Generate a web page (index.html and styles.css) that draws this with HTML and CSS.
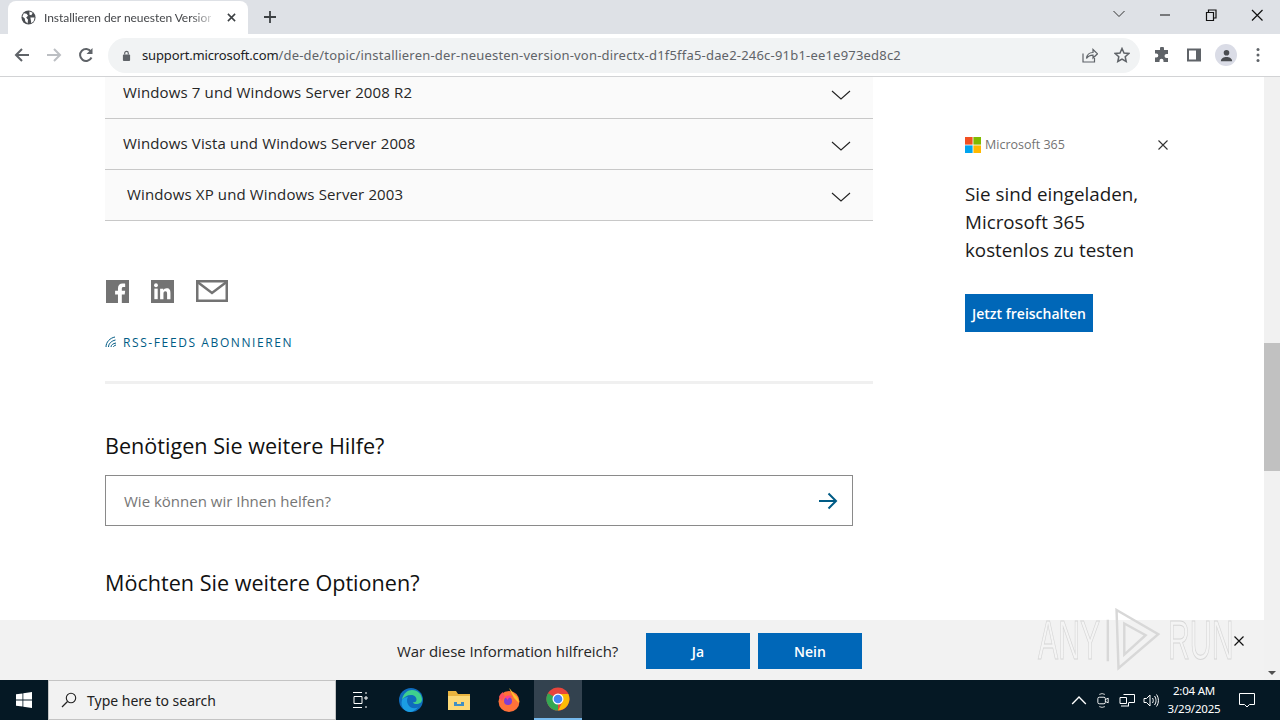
FILE: index.html
```html
<!DOCTYPE html>
<html lang="de">
<head>
  <meta charset="UTF-8" />
  <title>Installieren der neuesten Version von DirectX</title>
  <link rel="stylesheet" href="styles.css">
</head>
<body>
  <div class="tabstrip">
    <div class="tab">
      <svg class="favicon" viewBox="0 0 16 16"><circle cx="8" cy="8" r="7.5" fill="#4a4d51"/><path d="M3 3.5l3 .5 1.5 2-2 2 2 2.500-.5 4-2.500-2.500-.5-3-2.500-2zM9 1.500l3.500 1.500-1.500 2.500-2-.5zM10 8h4.500l-1 4-2.500 2-.5-3z" fill="#fff"/></svg>
      <span class="tab-title">Installieren der neuesten Version</span>
      <svg class="tab-close" viewBox="0 0 10 10"><path d="M1 1l8 8M9 1l-8 8" stroke="#3c4043" stroke-width="1.700"/></svg>
    </div>
    <svg class="new-tab" viewBox="0 0 12 12"><path d="M6 0v12M0 6h12" stroke="#3c4043" stroke-width="1.800"/></svg>
    <div class="window-controls">
      <svg class="win-btn" viewBox="0 0 46 20"><path d="M17.500 6l5.500 5.500L28.500 6" fill="none" stroke="#333" stroke-width="1"/></svg>
      <svg class="win-btn" viewBox="0 0 46 20"><path d="M18 10h10" stroke="#111" stroke-width="1"/></svg>
      <svg class="win-btn" viewBox="0 0 46 20"><path d="M18.500 7.500h7v8h-7zM20.500 7.500v-2.500h7.500v8h-2.500" fill="none" stroke="#111" stroke-width="1.200"/></svg>
      <svg class="win-btn" viewBox="0 0 46 20"><path d="M18 5l10.500 10.500M28.500 5L18 15.500" stroke="#111" stroke-width="1.200"/></svg>
    </div>
  </div>

  <div class="toolbar">
    <svg class="nav-icon" viewBox="0 0 16 16"><path d="M15 8H2M8 2L2 8l6 6" fill="none" stroke="#5f6368" stroke-width="2"/></svg>
    <svg class="nav-icon" viewBox="0 0 16 16"><path d="M1 8h13M8 2l6 6-6 6" fill="none" stroke="#bcbfc3" stroke-width="2"/></svg>
    <svg class="nav-icon" viewBox="0 0 16 16"><path d="M13.500 10.500A6 6 0 1 1 13 4.500" fill="none" stroke="#5f6368" stroke-width="2"/><path d="M14.500 1v6h-6z" fill="#5f6368"/></svg>
    <div class="omnibox">
      <svg class="lock" viewBox="0 0 10 12"><rect x="1" y="5" width="8" height="7" rx="1" fill="#5f6368"/><path d="M3 5V3.500a2 2 0 0 1 4 0V5" fill="none" stroke="#5f6368" stroke-width="1.300"/></svg>
      <span class="url"><span class="url-host">support.microsoft.com</span>/de-de/topic/installieren-der-neuesten-version-von-directx-d1f5ffa5-dae2-246c-91b1-ee1e973ed8c2</span>
      <svg class="omni-icon share-icon" viewBox="0 0 16 16"><path d="M1 6.500V15h11.500V11" fill="none" stroke="#5f6368" stroke-width="1.200"/><path d="M4.500 11.500c.5-4 3-6 6.500-6V2.500l4.500 4.300-4.500 4.200V8.200c-3 0-5 1-6.500 3.300z" fill="none" stroke="#5f6368" stroke-width="1.200"/></svg>
      <svg class="omni-icon" viewBox="0 0 16 16"><path d="M8 1.500l2 4.500 4.800.5-3.600 3.200 1 4.800L8 12l-4.200 2.500 1-4.800L1.200 6.500 6 6z" fill="none" stroke="#5f6368" stroke-width="1.500"/></svg>
    </div>
    <svg class="tool-icon puzzle" viewBox="0 0 16 16"><path d="M6 1.500a2 2 0 0 1 4 0V3h4v4h-1.500a2 2 0 0 0 0 4H14v4H9.500v-1.300a2 2 0 0 0-4 0V15H1v-4.500h1.300a2 2 0 0 0 0-4H1V3h5z" fill="#5f6368"/></svg>
    <svg class="tool-icon" viewBox="0 0 16 16"><path d="M1 1.500h14v13H1z" fill="#5f6368"/><path d="M3 3.500h7v9H3z" fill="#fff"/></svg>
    <div class="avatar">
      <svg viewBox="0 0 16 16"><circle cx="8" cy="5" r="3" fill="#4a4d51"/><path d="M2 14c0-3 3-4.500 6-4.500s6 1.500 6 4.500z" fill="#4a4d51"/></svg>
    </div>
    <svg class="menu-dots" viewBox="0 0 4 16"><circle cx="2" cy="2.500" r="1.500" fill="#5f6368"/><circle cx="2" cy="8" r="1.500" fill="#5f6368"/><circle cx="2" cy="13.500" r="1.500" fill="#5f6368"/></svg>
  </div>

  <div class="viewport">
    <div class="page">
      <main class="main">
        <div class="accordion">
          <div class="acc-row acc-first">
            <span>Windows 7 und Windows Server 2008 R2</span>
            <svg class="chevron" viewBox="0 0 20 10"><path d="M1 1l9 8 9-8" fill="none" stroke="#222" stroke-width="1.100"/></svg>
          </div>
          <div class="acc-row">
            <span>Windows Vista und Windows Server 2008</span>
            <svg class="chevron" viewBox="0 0 20 10"><path d="M1 1l9 8 9-8" fill="none" stroke="#222" stroke-width="1.100"/></svg>
          </div>
          <div class="acc-row acc-indent">
            <span>Windows XP und Windows Server 2003</span>
            <svg class="chevron" viewBox="0 0 20 10"><path d="M1 1l9 8 9-8" fill="none" stroke="#222" stroke-width="1.100"/></svg>
          </div>
        </div>

        <div class="share">
          <svg class="share-fb" viewBox="0 0 24 24"><rect width="24" height="24" fill="#737373"/><path d="M16.500 24v-9h3l.5-3.800h-3.500V9c0-1.100.4-1.800 1.900-1.800H20V3.800c-.4 0-1.500-.1-2.800-.1-2.800 0-4.700 1.700-4.700 4.800v2.700H9.500V15h3v9z" fill="#fff"/></svg>
          <svg class="share-in" viewBox="0 0 24 24"><rect width="24" height="24" fill="#737373"/><rect x="3.500" y="9" width="3.500" height="11" fill="#fff"/><circle cx="5.200" cy="5.500" r="2" fill="#fff"/><path d="M9.500 9h3.300v1.600c.6-1 1.800-1.900 3.500-1.900 3.300 0 4 2.200 4 5V20h-3.500v-5.500c0-1.400-.2-2.800-1.800-2.800s-2 1.300-2 2.700V20H9.500z" fill="#fff"/></svg>
          <svg class="share-mail" viewBox="0 0 32 22"><rect x="1.250" y="1.250" width="29.500" height="19.500" fill="none" stroke="#737373" stroke-width="2.500"/><path d="M1.500 2L16 13 30.500 2" fill="none" stroke="#737373" stroke-width="2.500"/></svg>
        </div>

        <a class="rss">
          <svg class="rss-icon" viewBox="0 0 12 12"><path d="M1 11C1 6 5 2 10 1M3.500 11c0-3 2.500-6 7-7M6 11c0-2 2-3.500 5-4M8.500 11c0-1 1-1.500 2.500-2" fill="none" stroke="#005b85" stroke-width="1"/></svg>
          <span>RSS-Feeds abonnieren</span>
        </a>

        <hr class="divider">

        <h2 class="help-title">Benötigen Sie weitere Hilfe?</h2>
        <div class="searchbox">
          <span class="placeholder">Wie können wir Ihnen helfen?</span>
          <svg class="search-arrow" viewBox="0 0 20 18"><path d="M1 9h17M10.500 1.500L18 9l-7.500 7.500" fill="none" stroke="#005b85" stroke-width="2"/></svg>
        </div>
        <h2 class="options-title">Möchten Sie weitere Optionen?</h2>
      </main>

      <aside class="aside">
        <div class="promo-head">
          <svg class="ms-logo" viewBox="0 0 16 16"><rect width="7.600" height="7.600" fill="#f25022"/><rect x="8.400" width="7.600" height="7.600" fill="#7fba00"/><rect y="8.400" width="7.600" height="7.600" fill="#00a4ef"/><rect x="8.400" y="8.400" width="7.600" height="7.600" fill="#ffb900"/></svg>
          <span class="promo-brand">Microsoft 365</span>
          <svg class="promo-close" viewBox="0 0 10 10"><path d="M.5.500l9 9M9.500.500l-9 9" stroke="#333" stroke-width="1.100"/></svg>
        </div>
        <p class="promo-text">Sie sind eingeladen, Microsoft 365 kostenlos zu testen</p>
        <div class="promo-btn">Jetzt freischalten</div>
      </aside>
    </div>

    <div class="scrollbar">
      <div class="scroll-thumb"></div>
      <div class="scroll-down"></div>
    </div>

    <div class="feedback">
      <span class="fb-question">War diese Information hilfreich?</span>
      <div class="fb-btn">Ja</div>
      <div class="fb-btn">Nein</div>
      <svg class="fb-close" viewBox="0 0 10 10"><path d="M.5.500l9 9M9.500.500l-9 9" stroke="#111" stroke-width="1.200"/></svg>
    </div>

    <div class="watermark">
      <span>ANY</span>
      <svg class="wm-logo" viewBox="0 0 60 66"><path d="M3 12v43M12 2l43 25-41 35zM20 16l22 12-22 20z" fill="none" stroke="#d8d8d8" stroke-width="2.500"/></svg>
      <span>RUN</span>
    </div>
  </div>

  <div class="taskbar">
    <div class="start">
      <svg viewBox="0 0 16 16"><path d="M0 2.300l6.500-.9v6.200H0zM7.300 1.300L16 0v7.600H7.300zM0 8.400h6.500v6.200L0 13.700zM7.300 8.400H16V16l-8.700-1.200z" fill="#fff"/></svg>
    </div>
    <div class="task-search">
      <svg class="search-glass" viewBox="0 0 16 16"><circle cx="10" cy="6" r="4.700" fill="none" stroke="#222" stroke-width="1.100"/><path d="M6.500 9.500L1 15" stroke="#222" stroke-width="1.300"/></svg>
      <span>Type here to search</span>
    </div>
    <div class="task-app task-view-slot">
      <svg class="task-view" viewBox="0 0 16 16"><path d="M1 .5h9M1 15.500h9M2 4.500h8v7H2zM13 1h2M13 5h2v2h-2zM13 15h2" fill="none" stroke="#fff" stroke-width="1"/></svg>
    </div>
    <div class="task-app">
      <svg viewBox="0 0 24 24"><circle cx="12" cy="12" r="12" fill="#0f6cbd"/><path d="M3 12C4 5 9 2 13 2c6 0 10 4.500 10 9.500 0 3-2.500 4.500-5.500 4.500-2 0-3.500-.7-3.500-1.800 3 .2 3.500-1.200 3.500-2.700C17.500 9 15 7 12 7c-4 0-7 2-9 5z" fill="#3fcf8e"/><path d="M3 12c1-2 4-3 6-3-2 3-1 8 3 10.500 2 1 5 1 7-.2C16 23 13 24 11 24 6 24 1 19 3 12z" fill="#1b9de2"/></svg>
    </div>
    <div class="task-app">
      <svg viewBox="0 0 24 22"><path d="M1 2h8l2 3h12v3H1z" fill="#e8b33f"/><path d="M1 7h22v14H1z" fill="#fbd877"/><path d="M7 13h10v4H7z" fill="#3f8fc4"/><path d="M10 13h4v2h-4z" fill="#fbd877"/></svg>
    </div>
    <div class="task-app task-firefox">
      <svg viewBox="0 0 24 24"><circle cx="12" cy="13.500" r="10.500" fill="#ff7139"/><path d="M12 0c3 2 3 5 6 7 3 2 4 6 4 8l-5-5z" fill="#ffc02c"/><path d="M2 9c1-3 3-4 4-5 0 2 1 3 2 4l-3 5z" fill="#ff4f5e"/><circle cx="11" cy="13" r="4" fill="#7f3fd1"/><path d="M8 9c2-2 6-2 7 0-2 0-4 1-4 3z" fill="#ff3d8b"/></svg>
    </div>
    <div class="task-app task-active">
      <svg viewBox="0 0 24 24"><circle cx="12" cy="12" r="11.500" fill="#e8453c"/><path d="M12 12L2 6.200A11.500 11.500 0 0 0 12 23.500z" fill="#34a853"/><path d="M12 7h10.300A11.500 11.500 0 0 1 12 23.500L17 14z" fill="#fbbc05"/><circle cx="12" cy="12" r="5.500" fill="#fff"/><circle cx="12" cy="12" r="4.300" fill="#4285f4"/></svg>
    </div>
    <div class="tray">
      <svg class="tray-icon" viewBox="0 0 14 8"><path d="M1 7l6-6 6 6" fill="none" stroke="#fff" stroke-width="1.200"/></svg>
      <svg class="tray-icon" viewBox="0 0 14 16"><path d="M3 1.500a6 6 0 0 1 6 0M3 14.500a6 6 0 0 0 6 0" fill="none" stroke="#ddd" stroke-width="1"/><rect x="1.500" y="4.500" width="8" height="7" rx="1.500" fill="none" stroke="#fff"/><path d="M9.500 7l3-1.500v5l-3-1.500" fill="none" stroke="#fff"/></svg>
      <svg class="tray-icon" viewBox="0 0 16 14"><path d="M4.500 1h11v8h-6M1 4h6.500v6H1zM2 12.500h8M9.500 9.500v3" fill="none" stroke="#fff"/></svg>
      <svg class="tray-icon" viewBox="0 0 16 14"><path d="M1 5h2.500L7 1.500v11L3.500 9H1zM9.500 4.500c1 1.500 1 3.500 0 5M11.500 2.500c2 2.500 2 6.500 0 9M13.500 1c2.500 3.500 2.500 8.500 0 12" fill="none" stroke="#fff"/></svg>
    </div>
    <div class="clock">
      <span>2:04 AM</span>
      <span>3/29/2025</span>
    </div>
    <svg class="notify" viewBox="0 0 16 16"><path d="M.5 1.500h15v11h-5L8 15l-2.500-2.500h-5z" fill="none" stroke="#fff"/></svg>
  </div>
</body>
</html>
```

FILE: styles.css
```css
* {
  box-sizing: border-box;
}

html, body {
  height: 100%;
}

body {
  margin: 0;
  width: 1280px;
  height: 720px;
  overflow: hidden;
  display: flex;
  flex-direction: column;
  font-family: "Open Sans", "Noto Sans", sans-serif;
  color: #1a1a1a;
  background: #fff;
}

/* browser chrome */
.tabstrip {
  height: 34px;
  background: #dee1e6;
  display: flex;
  align-items: flex-end;
  padding-left: 8px;
  flex-shrink: 0;
}

.tab {
  width: 240px;
  height: 33px;
  background: #fff;
  border-radius: 8px 8px 0 0;
  display: flex;
  align-items: center;
  padding: 0 12px 0 13px;
  gap: 8px;
}

.favicon {
  width: 15px;
  height: 15px;
  flex-shrink: 0;
}

.tab-title {
  flex: 1;
  min-width: 0;
  font-family: "Lato", "Noto Sans", sans-serif;
  font-size: 12px;
  letter-spacing: -0.05px;
  color: #45474a;
  white-space: nowrap;
  -webkit-mask-image: linear-gradient(to right, #000 88%, rgba(0, 0, 0, 0.25));
  mask-image: linear-gradient(to right, #000 88%, rgba(0, 0, 0, 0.25));
}

.tab-close {
  width: 9px;
  height: 9px;
  margin-left: 8px;
  flex-shrink: 0;
}

.new-tab {
  width: 12px;
  height: 12px;
  margin: 0 0 11px 16px;
}

.window-controls {
  margin-left: auto;
  align-self: flex-start;
  display: flex;
  padding-top: 5px;
}

.win-btn {
  width: 46px;
  height: 20px;
}

.toolbar {
  height: 43px;
  background: #fff;
  border-bottom: 1px solid #d2d3d5;
  display: flex;
  align-items: center;
  padding: 0 0 0 14px;
  flex-shrink: 0;
}

.nav-icon {
  width: 16px;
  height: 16px;
  margin-right: 16px;
}

.omnibox {
  width: 1032px;
  height: 35px;
  margin-left: -2px;
  border-radius: 18px;
  background: #f1f3f4;
  display: flex;
  align-items: center;
  padding: 0 10px 0 14px;
}

.lock {
  width: 9px;
  height: 11px;
  margin-right: 11px;
}

.url {
  flex: 1;
  font-family: "Noto Sans", sans-serif;
  font-size: 13px;
  letter-spacing: 0.2px;
  color: #5f6368;
  white-space: nowrap;
}

.url-host {
  color: #202124;
  letter-spacing: -0.14px;
}

.omni-icon {
  width: 16px;
  height: 16px;
  margin-left: 16px;
}

.tool-icon {
  width: 16px;
  height: 16px;
  margin-left: 16px;
}

.puzzle {
  margin-left: 14px;
}

.avatar {
  width: 22px;
  height: 22px;
  margin-left: 13px;
  border-radius: 50%;
  background: #dadce6;
  display: flex;
  align-items: center;
  justify-content: center;
}

.avatar svg {
  width: 15px;
  height: 15px;
}

.menu-dots {
  width: 4px;
  height: 16px;
  margin-left: 19px;
}

/* page area */
.viewport {
  position: relative;
  flex: 1;
  display: flex;
  overflow: hidden;
}

.page {
  flex: 1;
  display: flex;
  padding-left: 105px;
  overflow: hidden;
}

.main {
  width: 768px;
  flex-shrink: 0;
}

.acc-row {
  height: 51px;
  background: #fafafa;
  border-bottom: 1px solid #c8c8c8;
  display: flex;
  align-items: center;
  justify-content: space-between;
  padding: 0 22px 2px 18px;
  font-size: 15px;
  letter-spacing: 0.14px;
  color: #262626;
}

.acc-first {
  height: 42px;
  padding-bottom: 11px;
}

.acc-indent {
  padding-left: 22px;
}

.chevron {
  width: 20px;
  height: 10px;
  margin-top: 6px;
}

.share {
  display: flex;
  align-items: center;
  margin-top: 58px;
  padding-left: 1px;
  height: 24px;
}

.share-fb, .share-in {
  width: 23px;
  height: 23px;
}

.share-in {
  margin-left: 22px;
}

.share-mail {
  width: 32px;
  height: 22px;
  margin-left: 22px;
}

.rss {
  display: flex;
  align-items: center;
  gap: 6px;
  margin-top: 30px;
  height: 18px;
  font-size: 12px;
  letter-spacing: 1.6px;
  text-transform: uppercase;
  color: #005b85;
}

.rss-icon {
  width: 12px;
  height: 12px;
}

.divider {
  margin: 30px 0 0;
  border: 0;
  height: 3px;
  background: #f0f0f0;
}

.help-title, .options-title {
  margin: 0;
  font-size: 21.6px;
  font-weight: 400;
  line-height: 30px;
  color: #111;
}

.help-title {
  margin-top: 47px;
}

.searchbox {
  width: 748px;
  height: 51px;
  margin-top: 14px;
  border: 1px solid #8a8a8a;
  display: flex;
  align-items: center;
  justify-content: space-between;
  padding: 0 14px 0 18px;
}

.placeholder {
  font-size: 15px;
  color: #767676;
}

.search-arrow {
  width: 20px;
  height: 18px;
}

.options-title {
  margin-top: 42px;
}

.aside {
  width: 204px;
  margin-left: 92px;
  padding-top: 60px;
  flex-shrink: 0;
}

.promo-head {
  display: flex;
  align-items: center;
  height: 16px;
}

.ms-logo {
  width: 16px;
  height: 16px;
}

.promo-brand {
  margin: 0 0 2px 4px;
  font-size: 12.500px;
  color: #737373;
}

.promo-close {
  width: 10px;
  height: 10px;
  margin-left: auto;
  margin-right: 1px;
}

.promo-text {
  margin: 27px 0 0;
  width: 190px;
  font-size: 18.8px;
  line-height: 28px;
  color: #1a1a1a;
}

.promo-btn {
  width: 128px;
  height: 38px;
  margin-top: 30px;
  background: #0067b8;
  color: #fff;
  font-size: 14px;
  font-weight: 600;
  display: flex;
  align-items: center;
  justify-content: center;
}

.scrollbar {
  width: 16px;
  background: #f1f1f1;
  position: relative;
  flex-shrink: 0;
}

.scroll-thumb {
  position: absolute;
  top: 266px;
  left: 0;
  width: 16px;
  height: 128px;
  background: #c1c1c1;
}

.scroll-down {
  position: absolute;
  left: 4px;
  bottom: 5px;
  border-left: 4px solid transparent;
  border-right: 4px solid transparent;
  border-top: 4px solid #505050;
}

/* overlays on the page */
.feedback {
  position: absolute;
  left: 0;
  right: 16px;
  bottom: 0;
  height: 60px;
  background: #f2f2f2;
  display: flex;
  align-items: center;
  padding: 2px 0 0 397px;
}

.fb-question {
  font-size: 15px;
  letter-spacing: -0.06px;
  color: #262626;
  width: 249px;
}

.fb-btn {
  width: 104px;
  height: 36px;
  background: #0067b8;
  color: #fff;
  font-size: 14px;
  font-weight: 600;
  display: flex;
  align-items: center;
  justify-content: center;
  margin-right: 8px;
}

.fb-close {
  position: absolute;
  left: 1234px;
  top: 16px;
  width: 10px;
  height: 10px;
}

.watermark {
  position: absolute;
  left: 1038px;
  top: 531px;
  display: flex;
  align-items: center;
  font-family: "Liberation Sans", sans-serif;
  font-size: 56px;
  line-height: 64px;
  color: #f4f4f4;
  -webkit-text-stroke: 1px #d6d6d6;
  pointer-events: none;
}

.watermark span {
  display: inline-block;
  width: 66px;
  white-space: nowrap;
  transform: scaleX(0.54);
  transform-origin: left center;
}

.wm-logo {
  width: 60px;
  height: 64px;
  margin-right: 4px;
}

/* taskbar */
.taskbar {
  height: 40px;
  background: #051824;
  display: flex;
  align-items: center;
  flex-shrink: 0;
}

.start {
  width: 48px;
  height: 40px;
  display: flex;
  align-items: center;
  justify-content: center;
}

.start svg {
  width: 16px;
  height: 16px;
}

.task-search {
  width: 288px;
  height: 40px;
  background: #f2f2f2;
  border: 1px solid #c4c4c4;
  display: flex;
  align-items: center;
  padding-left: 12px;
  gap: 10px;
  font-family: "Noto Sans", sans-serif;
  font-size: 14px;
  color: #222;
}

.search-glass {
  width: 16px;
  height: 16px;
}

.task-app {
  width: 48px;
  height: 40px;
  display: flex;
  align-items: center;
  justify-content: center;
}

.task-app svg {
  width: 24px;
  height: 24px;
}

.task-view-slot {
  width: 51px;
  padding-right: 3px;
}

.task-app .task-view {
  width: 16px;
  height: 16px;
}

.task-firefox {
  margin-left: 2px;
}

.task-active {
  margin-left: 1px;
  background: #33424f;
  border-bottom: 2px solid #76b9ed;
}

.tray {
  margin-left: auto;
  display: flex;
  align-items: center;
  gap: 8px;
}

.tray-icon {
  width: 16px;
  height: 15px;
}

.clock {
  width: 70px;
  display: flex;
  flex-direction: column;
  align-items: center;
  font-family: "Noto Sans", sans-serif;
  font-size: 11.5px;
  letter-spacing: -0.2px;
  line-height: 18px;
  color: #fff;
}

.notify {
  width: 16px;
  height: 16px;
  margin: 0 25px 0 10px;
}
```
